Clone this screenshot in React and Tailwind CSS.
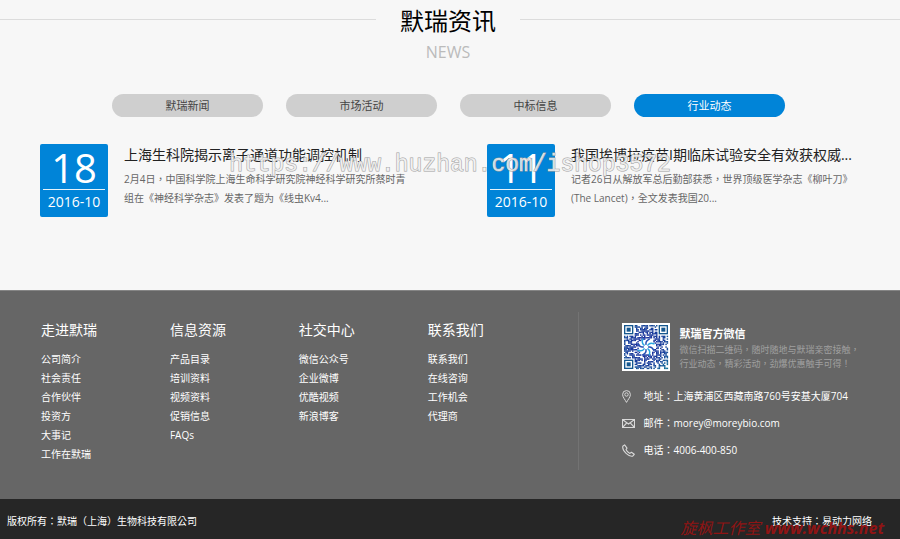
import { useState } from 'react';

const tabs = ['默瑞新闻', '市场活动', '中标信息', '行业动态'];

const news = [
  {
    day: '18',
    month: '2016-10',
    title: '上海生科院揭示离子通道功能调控机制',
    text: '2月4日，中国科学院上海生命科学研究院神经科学研究所蔡时青组在《神经科学杂志》发表了题为《线虫Kv4...',
  },
  {
    day: '11',
    month: '2016-10',
    title: '我国埃博拉疫苗I期临床试验安全有效获权威...',
    text: '记者26日从解放军总后勤部获悉，世界顶级医学杂志《柳叶刀》(The Lancet)，全文发表我国20...',
  },
];

const columns = [
  { title: '走进默瑞', links: ['公司简介', '社会责任', '合作伙伴', '投资方', '大事记', '工作在默瑞'] },
  { title: '信息资源', links: ['产品目录', '培训资料', '视频资料', '促销信息', 'FAQs'] },
  { title: '社交中心', links: ['微信公众号', '企业微博', '优酷视频', '新浪博客'] },
  { title: '联系我们', links: ['联系我们', '在线咨询', '工作机会', '代理商'] },
];

const QR_SIZE = 33;

// dark modules of the code, corners and centre are drawn separately
function qrModules() {
  const cells = [];
  let seed = 20161;
  for (let y = 0; y < QR_SIZE; y++) {
    for (let x = 0; x < QR_SIZE; x++) {
      seed = (seed * 48271) % 2147483647;
      const corner = (x < 8 && y < 8) || (x > QR_SIZE - 9 && y < 8) || (x < 8 && y > QR_SIZE - 9);
      const logo = Math.hypot(x - 16, y - 16) < 6;
      if (!corner && !logo && seed / 2147483647 > 0.45) {
        cells.push({ x, y });
      }
    }
  }
  return cells;
}

const modules = qrModules();

function QrCode() {
  return (
    <svg viewBox="-1.5 -1.5 36 36" className="w-12 h-12 shrink-0 bg-white" role="img" aria-label="默瑞官方微信">
      <defs>
        <radialGradient id="qr" gradientUnits="userSpaceOnUse" cx="16" cy="16" r="23">
          <stop offset="0.2" stopColor="#1c2f9c" />
          <stop offset="0.65" stopColor="#17409a" />
          <stop offset="1" stopColor="#0d6f96" />
        </radialGradient>
      </defs>
      <g fill="url(#qr)">
        {modules.map((m) => (
          <rect key={`${m.x}-${m.y}`} x={m.x} y={m.y} width="1.1" height="1.1" />
        ))}
      </g>
      {[[0, 0], [26, 0], [0, 26]].map(([x, y]) => (
        <g key={`${x}-${y}`}>
          <rect x={x + 0.5} y={y + 0.5} width="6" height="6" fill="none" stroke="#15578f" strokeWidth="1" />
          <rect x={x + 2} y={y + 2} width="3" height="3" fill="#15578f" />
        </g>
      ))}
      <g fill="none" strokeWidth="1.1" strokeLinecap="round">
        {[0, 45, 90, 135, 180, 225, 270, 315].map((a) => (
          <path
            key={a}
            d="M16.5 14.5 Q16 12 19 10.6"
            stroke={a % 90 ? '#2aa7e0' : '#2450b4'}
            transform={`rotate(${a} 16.5 16.5)`}
          />
        ))}
      </g>
    </svg>
  );
}

function PinIcon() {
  return (
    <svg viewBox="0 0 13 13" className="w-[13px] h-[13px]" fill="none" stroke="#d9d9d9" strokeWidth="1">
      <path d="M4.5 12.4C3.2 9.8 0.6 7.2 0.6 4.5a3.9 3.9 0 0 1 7.8 0C8.4 7.2 5.8 9.8 4.5 12.4Z" />
      <circle cx="4.5" cy="4.5" r="1.7" />
    </svg>
  );
}

function MailIcon() {
  return (
    <svg viewBox="0 0 13 13" className="w-[13px] h-[13px]" fill="none" stroke="#d9d9d9" strokeWidth="1.1">
      <path d="M0.5 2.5h12v8h-12ZM0.5 2.5l6 4.5 6-4.5M0.5 10.5l4.3-4.6M12.5 10.5l-4.3-4.6" />
    </svg>
  );
}

function PhoneIcon() {
  return (
    <svg viewBox="0 0 13 13" className="w-[13px] h-[13px]" fill="none" stroke="#d9d9d9" strokeWidth="1.1" strokeLinejoin="round">
      <path d="M2.6 0.9 0.8 2.3C0.3 4.5 2.2 7.6 4.1 9.4 6 11.2 8.5 12.6 10.7 12.1L12.3 10.3 9.4 8.2 7.9 9.4C6.5 8.8 4.6 6.9 4 5.5L5 4.1Z" />
    </svg>
  );
}

function NewsItem({ item }) {
  return (
    <article className="flex gap-4">
      <time className="w-[68px] h-[73px] shrink-0 rounded-xs bg-[#0084d8] text-white text-center px-[3px]">
        <span className="block h-[46px] text-[40px] leading-[48px] border-b border-white/90">{item.day}</span>
        <span className="block text-[14px] leading-[23px]">{item.month}</span>
      </time>
      <div className="min-w-0">
        <h3 className="text-[14px] leading-[22px] text-[#222] truncate">
          <a href="#">{item.title}</a>
        </h3>
        <p className="mt-1 text-[10px] leading-[19px] text-[#666] font-['Open_Sans','Noto_Sans_CJK_TC',sans-serif]">
          {item.text}
        </p>
      </div>
    </article>
  );
}

function Contact({ icon, children }) {
  return (
    <li className="flex items-center gap-[9px] h-[27px]">
      {icon}
      <span>{children}</span>
    </li>
  );
}

function App() {
  const [active, setActive] = useState(3);

  return (
    <div className="relative bg-[#f7f7f7] font-['Open_Sans','Noto_Sans_CJK_SC',sans-serif]">
      <section className="min-h-[290px]">
        <div className="grid grid-cols-[94fr_144px_95fr] items-start pt-[6px]">
          <div className="mt-[13px] border-t border-[#dcdcdc]"></div>
          <div className="text-center">
            <h2 className="text-[24px] leading-[30px] text-black">默瑞资讯</h2>
            <p className="text-[16px] leading-[20px] mt-[6px] text-[#bbb]">NEWS</p>
          </div>
          <div className="mt-[13px] border-t border-[#dcdcdc]"></div>
        </div>

        <div className="pr-[3px] mt-8">
          <div className="max-w-[673px] mx-auto grid grid-cols-4 gap-[23px]">
            {tabs.map((tab, index) => (
              <button
                key={tab}
                type="button"
                onClick={() => setActive(index)}
                className={`h-[23px] rounded-full text-[11px] leading-[23px] ${
                  active === index ? 'bg-[#0084d8] text-white' : 'bg-[#cfcfcf] text-[#444]'
                }`}
              >
                {tab}
              </button>
            ))}
          </div>
        </div>

        <div className="grid grid-cols-2 gap-[74px] px-10 mt-[27px]">
          {news.map((item) => (
            <NewsItem key={item.day} item={item} />
          ))}
        </div>
      </section>

      <footer className="text-white text-[10px] font-['Open_Sans','Noto_Sans_CJK_TC',sans-serif]">
        <div className="grid grid-cols-[9fr_5fr] bg-[#666] border-t border-[#858585] pt-[21px] pb-[29px]">
          <nav className="grid grid-cols-4 pl-[41px] pr-[21px] h-[158px] border-r border-[#737373] font-['Open_Sans','Noto_Sans_CJK_SC',sans-serif]">
            {columns.map((col) => (
              <div key={col.title}>
                <h4 className="text-[14px] leading-[20px] mt-2 mb-[10px]">{col.title}</h4>
                <ul>
                  {col.links.map((link) => (
                    <li key={link} className="leading-[19px]">
                      <a href="#">{link}</a>
                    </li>
                  ))}
                </ul>
              </div>
            ))}
          </nav>

          <div className="pl-[43px] pt-[11px]">
            <div className="flex gap-[10px]">
              <QrCode />
              <div>
                <h4 className="text-[11px] leading-[14px] mt-1 font-bold">默瑞官方微信</h4>
                <p className="text-[9px] leading-[14px] mt-[2px] text-[#a0a0a0]">
                  微信扫描二维码，随时随地与默瑞亲密接触，
                  <br />
                  行业动态，精彩活动，劲爆优惠触手可得！
                </p>
              </div>
            </div>
            <ul className="mt-3">
              <Contact icon={<PinIcon />}>地址：上海黄浦区西藏南路760号安基大厦704</Contact>
              <Contact icon={<MailIcon />}>邮件：morey@moreybio.com</Contact>
              <Contact icon={<PhoneIcon />}>电话：4006-400-850</Contact>
            </ul>
          </div>
        </div>

        <div className="flex justify-between bg-[#262626] h-10 pl-[7px] pr-7 pt-[13px] leading-[19px]">
          <p>版权所有：默瑞（上海）生物科技有限公司</p>
          <p>技术支持：易动力网络</p>
        </div>
      </footer>

      <div className="absolute inset-x-0 top-[150px] text-center text-[23px] leading-[30px] font-['Liberation_Mono',monospace] text-[#f7f7f7]/80 [-webkit-text-stroke:1px_#a0a0a0] [paint-order:stroke_fill] pointer-events-none">
        https://www.huzhan.com/ishop3572
      </div>
      <div className="absolute right-4 bottom-0 text-[16px] leading-[22px] italic text-[#8f1414] pointer-events-none">
        旋枫工作室 <b>www.wchhs.net</b>
      </div>
    </div>
  );
}

export default App;
